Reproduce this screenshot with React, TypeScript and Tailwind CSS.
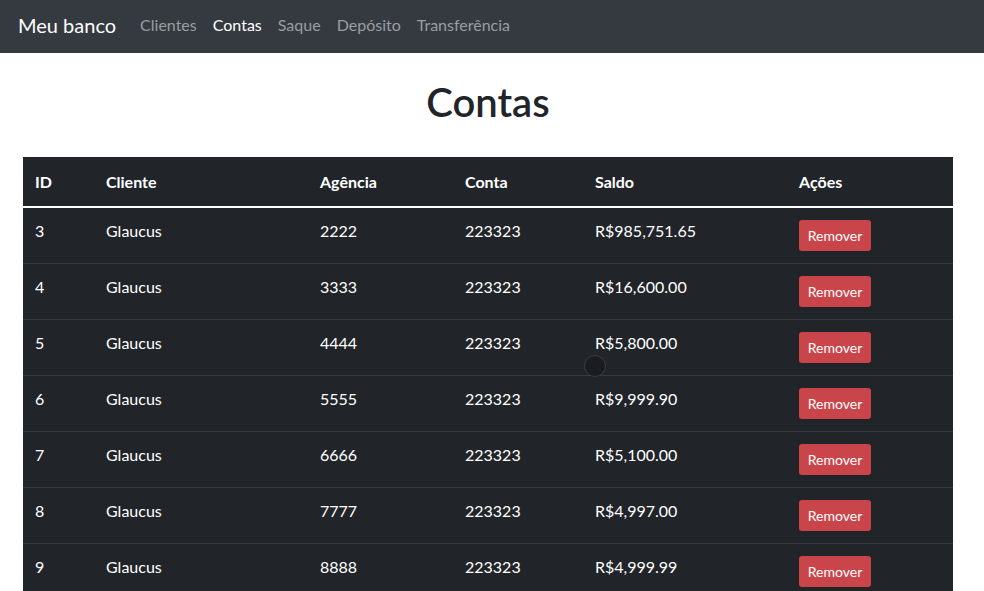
import React from "react";

type Conta = {
    id: number;
    cliente: string;
    agencia: string;
    conta: string;
    saldo: string;
};

const contas: Conta[] = [
    { id: 3, cliente: "Glaucus", agencia: "2222", conta: "223323", saldo: "R$985,751.65" },
    { id: 4, cliente: "Glaucus", agencia: "3333", conta: "223323", saldo: "R$16,600.00" },
    { id: 5, cliente: "Glaucus", agencia: "4444", conta: "223323", saldo: "R$5,800.00" },
    { id: 6, cliente: "Glaucus", agencia: "5555", conta: "223323", saldo: "R$9,999.90" },
    { id: 7, cliente: "Glaucus", agencia: "6666", conta: "223323", saldo: "R$5,100.00" },
    { id: 8, cliente: "Glaucus", agencia: "7777", conta: "223323", saldo: "R$4,997.00" },
    { id: 9, cliente: "Glaucus", agencia: "8888", conta: "223323", saldo: "R$4,999.99" },
];

const links = ["Clientes", "Contas", "Saque", "Depósito", "Transferência"];

const Navbar: React.FC = () => (
    <nav className="h-[53px] bg-[#343a40] flex items-center px-[18px] pb-[3px]">
        <span className="text-[20px] text-white mr-[24px]">Meu banco</span>
        <div className="flex gap-[16px] text-[16px]">
            {links.map((l) => (
                <span key={l} className={l === "Contas" ? "text-white" : "text-[#9a9da1]"}>
                    {l}
                </span>
            ))}
        </div>
    </nav>
);

export default function App() {
    return (
        <div
            className="relative h-[591px] overflow-hidden bg-white text-[#212529]"
            style={{ fontFamily: 'Lato, "Noto Sans", sans-serif' }}
        >
            <Navbar />
            <h1 className="text-center text-[40px] font-semibold leading-[48px] mt-[25px] mb-[31px] pr-[8px]">Contas</h1>
            <table className="ml-[23px] w-[930px] table-fixed border-collapse bg-[#212529] text-white text-[16px] leading-[24px]">
                <colgroup>
                    <col className="w-[71px]" />
                    <col className="w-[214px]" />
                    <col className="w-[145px]" />
                    <col className="w-[130px]" />
                    <col className="w-[204px]" />
                    <col className="w-[166px]" />
                </colgroup>
                <thead className="border-b-2 border-white">
                    <tr className="text-left font-bold">
                        <th className="px-[12px] pt-[13px] pb-[12px]">ID</th>
                        <th className="px-[12px] pt-[13px] pb-[12px]">Cliente</th>
                        <th className="px-[12px] pt-[13px] pb-[12px]">Agência</th>
                        <th className="px-[12px] pt-[13px] pb-[12px]">Conta</th>
                        <th className="px-[12px] pt-[13px] pb-[12px]">Saldo</th>
                        <th className="px-[12px] pt-[13px] pb-[12px]">Ações</th>
                    </tr>
                </thead>
                <tbody>
                    {contas.map((c) => (
                        <tr key={c.id} className="border-b border-[#373b3e] align-top">
                            <td className="px-[12px] pt-[11px] pb-[13px]">{c.id}</td>
                            <td className="px-[12px] pt-[11px] pb-[13px]">{c.cliente}</td>
                            <td className="px-[12px] pt-[11px] pb-[13px]">{c.agencia}</td>
                            <td className="px-[12px] pt-[11px] pb-[13px]">{c.conta}</td>
                            <td className="px-[12px] pt-[11px] pb-[13px]">{c.saldo}</td>
                            <td className="px-[12px] pt-[12px] pb-[12px]">
                                <button className="h-[31px] w-[72px] rounded-[3px] bg-[#c9454a] text-white text-[14px] leading-[21px]">
                                    Remover
                                </button>
                            </td>
                        </tr>
                    ))}
                </tbody>
            </table>
            <div className="absolute left-[584px] top-[355px] w-[22px] h-[22px] rounded-full bg-[#1b1c1f] border border-[#3a3d42]" />
        </div>
    );
}
